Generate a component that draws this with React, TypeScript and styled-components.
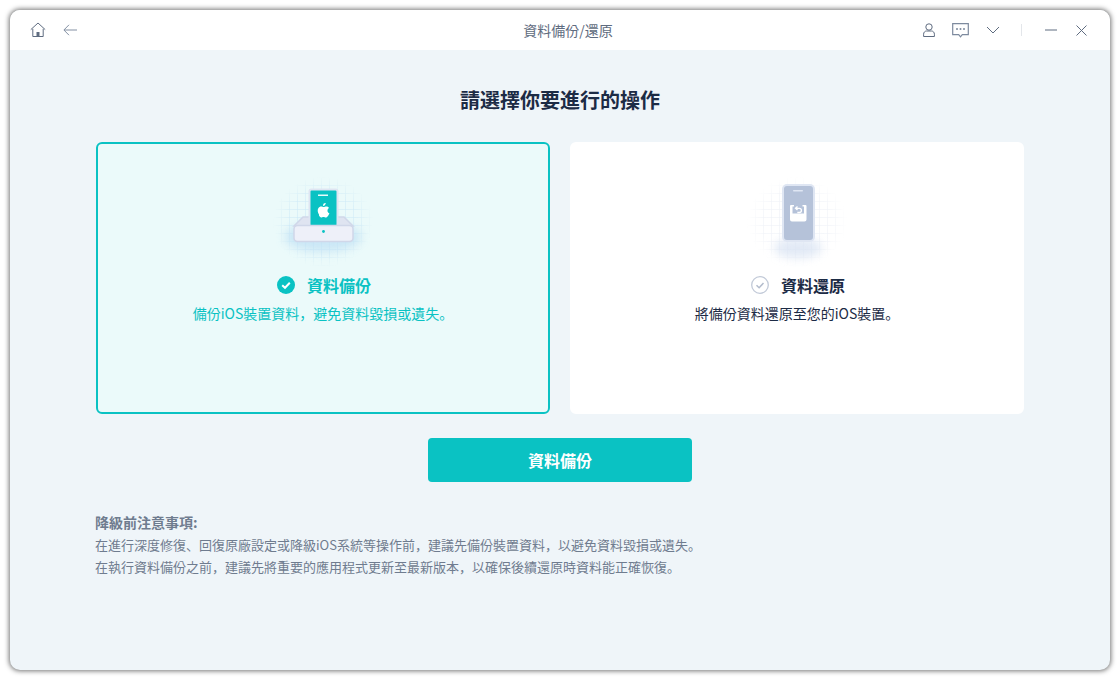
import React, { useState } from "react";
import styled, { createGlobalStyle } from "styled-components";

const fontStack = `"Noto Sans CJK JP", "Noto Sans CJK TC", "Noto Sans", sans-serif`;

const GlobalStyle = createGlobalStyle`
  html, body {
    margin: 0;
    padding: 0;
    background: #ffffff;
  }
  body {
    font-family: ${fontStack};
  }
`;

const GridDefs = ({ id, color }: { id: string; color: string }) => (
  <defs>
    <pattern id={`${id}-grid`} width="8" height="8" patternUnits="userSpaceOnUse">
      <path d="M8 0H0V8" fill="none" stroke={color} strokeWidth="1" />
    </pattern>
    <radialGradient id={`${id}-fade`} cx="50%" cy="50%" r="50%">
      <stop offset="0%" stopColor="#fff" stopOpacity="1" />
      <stop offset="70%" stopColor="#fff" stopOpacity="0.75" />
      <stop offset="100%" stopColor="#fff" stopOpacity="0" />
    </radialGradient>
    <mask id={`${id}-mask`}>
      <rect width="100" height="90" fill={`url(#${id}-fade)`} />
    </mask>
    <filter id={`${id}-blur`} x="-50%" y="-50%" width="200%" height="200%">
      <feGaussianBlur stdDeviation="5" />
    </filter>
  </defs>
);

const BackupArt = () => (
  <svg width="100" height="90" viewBox="0 0 100 90">
    <GridDefs id="backup" color="#c4e3f5" />
    <rect width="100" height="90" fill="url(#backup-grid)" mask="url(#backup-mask)" />
    <ellipse cx="50" cy="60" rx="38" ry="15" fill="#bfe0f4" opacity="0.75" filter="url(#backup-blur)" />
    <path d="M30 40h41l9 9H21z" fill="#dfe4f1" stroke="#d0d7e9" strokeWidth="1.5" />
    <rect x="36.5" y="12.5" width="28" height="37" fill="#0ac2c3" stroke="#dfe5f2" strokeWidth="2" rx="2" />
    <rect x="45" y="17.5" width="10" height="1.5" fill="#e8fbfb" />
    <g transform="translate(-1 1)">
      <path
        d="M51.2 26.2c.8-1 2-1.200 2.600-1.200-.1 1-.5 1.800-1 2.300-.5.6-1.200.9-1.800.8 0-.7.4-1.400.2-1.900z"
        fill="#ffffff"
      />
      <path
        d="M47 36.500c-1.300-1.900-1.800-4.600-.7-6.300.7-1.100 1.800-1.700 2.900-1.700 1 0 1.700.6 2.500.6s1.300-.6 2.600-.6c1 0 2 .5 2.700 1.400-2.200 1.300-1.900 4.500.4 5.400-.4 1-.9 1.800-1.400 2.600-.6.900-1.300 1.500-2.200 1.500-.9 0-1.300-.5-2.300-.5s-1.500.5-2.300.5c-.8 0-1.500-.9-2.200-2z"
        fill="#ffffff"
      />
    </g>
    <rect x="21" y="48.5" width="59" height="16" rx="3.5" fill="#eef0f9" stroke="#d0d7e9" strokeWidth="1.5" />
    <circle cx="50.5" cy="54.5" r="1.4" fill="#0ac2c3" />
  </svg>
);

const RestoreArt = () => (
  <svg width="100" height="90" viewBox="0 0 100 90">
    <GridDefs id="restore" color="#e8ecf3" />
    <rect width="100" height="90" fill="url(#restore-grid)" mask="url(#restore-mask)" />
    <ellipse cx="51" cy="71" rx="24" ry="10" fill="#d6e1f2" opacity="0.7" filter="url(#restore-blur)" />
    <rect x="36" y="8" width="31" height="56" rx="4" fill="#b5c2d9" stroke="#dfe6f3" strokeWidth="2" />
    <rect x="46" y="13" width="10" height="1.5" rx="0.7" fill="#dfe6f3" />
    <path
      d="M44 28h3v1.500h-1.500v7H57v-7h-1.500V28h3a1 1 0 0 1 1 1v13.500a2 2 0 0 1-2 2H45a2 2 0 0 1-2-2V29a1 1 0 0 1 1-1z"
      fill="#ffffff"
    />
    <path d="M45.500 38h4l2 2 2-2h4v1l-2 2.500h-8l-2-2.500z" fill="#ffffff" />
    <path
      d="M50.500 29.500l-2 1.800 2 1.800M48.800 31.300h3.500a2.100 2.100 0 0 1 0 4.200h-2"
      fill="none"
      stroke="#ffffff"
      strokeWidth="1.300"
    />
  </svg>
);

const HomeIcon = () => (
  <svg width="16" height="16" viewBox="0 0 16 16" fill="none" stroke="#5f6c80" strokeWidth="1">
    <path d="M.8 7.600 8 1l7.200 6.600" />
    <path d="M2.800 6.800v7.700h10.400V6.800" />
    <rect x="6.500" y="10" width="3" height="4.500" fill="#5f6c80" stroke="none" />
  </svg>
);

const BackIcon = () => (
  <svg width="14" height="12" viewBox="0 0 14 12" fill="none" stroke="#8390a3" strokeWidth="1">
    <path d="M6 .8.900 6 6 11.200M1 6h13" />
  </svg>
);

const UserIcon = () => (
  <svg width="12" height="14" viewBox="0 0 12 14" fill="none" stroke="#5f6c80" strokeWidth="1">
    <circle cx="6" cy="4" r="3.200" />
    <path d="M.6 13.500v-2.300C.6 9.300 2 8 3.500 8h5c1.500 0 2.900 1.300 2.900 3.200v2.300z" />
  </svg>
);

const FeedbackIcon = () => (
  <svg width="17" height="15" viewBox="0 0 17 15" fill="none">
    <path d="M.7.700h15.600v11h-6L8.500 13.800 6.700 11.700h-6z" stroke="#7d8a9e" strokeWidth="1.200" />
    <circle cx="5" cy="6" r="1" fill="#7d8a9e" />
    <circle cx="8.500" cy="6" r="1" fill="#7d8a9e" />
    <circle cx="12" cy="6" r="1" fill="#7d8a9e" />
  </svg>
);

const ChevronIcon = () => (
  <svg width="14" height="8" viewBox="0 0 14 8" fill="none" stroke="#5f6c80" strokeWidth="1">
    <path d="M1 1l6 6 6-6" />
  </svg>
);

const MinimizeIcon = () => (
  <svg width="12" height="2" viewBox="0 0 12 2" fill="none" stroke="#5f6c80" strokeWidth="1">
    <path d="M0 1h12" />
  </svg>
);

const CloseIcon = () => (
  <svg width="11" height="11" viewBox="0 0 11 11" fill="none" stroke="#5f6c80" strokeWidth="1">
    <path d="M.5.500l10 10M10.500.500l-10 10" />
  </svg>
);

const CheckBadge = ({ active }: { active: boolean }) =>
  active ? (
    <svg width="18" height="18" viewBox="0 0 18 18">
      <circle cx="9" cy="9" r="9" fill="#0ac2c3" />
      <path d="M5.200 9.200l2.800 2.600 4.800-5" fill="none" stroke="#fff" strokeWidth="2" />
    </svg>
  ) : (
    <svg width="18" height="18" viewBox="0 0 18 18">
      <circle cx="9" cy="9" r="8.300" fill="none" stroke="#c2cad8" strokeWidth="1.300" />
      <path d="M5.500 9.200l2.600 2.500 4.400-4.600" fill="none" stroke="#b3bccc" strokeWidth="1.500" />
    </svg>
  );

type Mode = "backup" | "restore";

const options: { key: Mode; title: string; desc: string; art: React.ReactNode }[] = [
  {
    key: "backup",
    title: "資料備份",
    desc: "備份iOS裝置資料\uFF0C避免資料毀損或遺失。",
    art: <BackupArt />,
  },
  {
    key: "restore",
    title: "資料還原",
    desc: "將備份資料還原至您的iOS裝置。",
    art: <RestoreArt />,
  },
];

const notes = [
  "在進行深度修復、回復原廠設定或降級iOS系統等操作前\uFF0C建議先備份裝置資料\uFF0C以避免資料毀損或遺失。",
  "在執行資料備份之前\uFF0C建議先將重要的應用程式更新至最新版本\uFF0C以確保後續還原時資料能正確恢復。",
];

export default function App() {
  const [mode, setMode] = useState<Mode>("backup");

  return (
    <Page>
      <GlobalStyle />
      <Window>
        <TitleBar>
          <BarGroup>
            <IconButton $width={16}>
              <HomeIcon />
            </IconButton>
            <IconButton $width={14}>
              <BackIcon />
            </IconButton>
          </BarGroup>
          <BarTitle>資料備份/還原</BarTitle>
          <BarActions>
            <IconButton $width={12}>
              <UserIcon />
            </IconButton>
            <IconButton $width={17}>
              <FeedbackIcon />
            </IconButton>
            <IconButton $width={14}>
              <ChevronIcon />
            </IconButton>
            <BarDivider />
            <IconButton $width={17}>
              <MinimizeIcon />
            </IconButton>
            <IconButton $width={11}>
              <CloseIcon />
            </IconButton>
          </BarActions>
        </TitleBar>

        <Content>
          <Heading>請選擇你要進行的操作</Heading>
          <CardRow>
            {options.map((option) => {
              const active = option.key === mode;
              return (
                <Card key={option.key} $active={active} onClick={() => setMode(option.key)}>
                  <ArtBox>{option.art}</ArtBox>
                  <CardTitleRow>
                    <CheckBadge active={active} />
                    <CardTitle $active={active}>{option.title}</CardTitle>
                  </CardTitleRow>
                  <CardDesc $active={active}>{option.desc}</CardDesc>
                </Card>
              );
            })}
          </CardRow>
          <PrimaryButton>{mode === "backup" ? "資料備份" : "資料還原"}</PrimaryButton>
          <Notes>
            <NotesTitle>降級前注意事項:</NotesTitle>
            {notes.map((line) => (
              <NotesLine key={line}>{line}</NotesLine>
            ))}
          </Notes>
        </Content>
      </Window>
    </Page>
  );
}

const Page = styled.div`
  width: 1120px;
  height: 680px;
  padding: 10px;
  box-sizing: border-box;
  overflow: hidden;
`;

const Window = styled.div`
  width: 1100px;
  height: 660px;
  border-radius: 10px;
  overflow: hidden;
  background: #eff5f9;
  box-shadow: 0 0 5px 1px rgba(0, 0, 0, 0.55);
  display: flex;
  flex-direction: column;
`;

const TitleBar = styled.header`
  position: relative;
  height: 40px;
  flex: none;
  background: #ffffff;
  display: flex;
  align-items: center;
  justify-content: space-between;
  padding: 0 23px 0 20px;
`;

const BarGroup = styled.div`
  display: flex;
  align-items: center;
  gap: 17px;
`;

const BarActions = styled.div`
  display: flex;
  align-items: center;
  gap: 17px;
`;

const IconButton = styled.button<{ $width: number }>`
  width: ${(p) => p.$width}px;
  height: 18px;
  padding: 0;
  border: none;
  background: none;
  display: flex;
  align-items: center;
  justify-content: center;
  cursor: pointer;
`;

const BarTitle = styled.div`
  position: absolute;
  left: 16px;
  right: 0;
  text-align: center;
  font-size: 14px;
  line-height: 40px;
  color: #5f6c80;
  pointer-events: none;
`;

const BarDivider = styled.span`
  width: 1px;
  height: 12px;
  margin: 0 3px 0 4px;
  background: #e3e6ea;
`;

const Content = styled.main`
  flex: 1;
  display: flex;
  flex-direction: column;
  align-items: center;
  padding-top: 35px;
`;

const Heading = styled.h1`
  margin: 0 0 27px;
  font-size: 20px;
  line-height: 30px;
  font-weight: 700;
  color: #1c2b45;
`;

const CardRow = styled.div`
  display: flex;
  gap: 20px;
`;

const Card = styled.div<{ $active: boolean }>`
  width: 454px;
  height: 272px;
  box-sizing: border-box;
  border-radius: 6px;
  border: 2px solid ${(p) => (p.$active ? "#0ac2c3" : "#ffffff")};
  background: ${(p) => (p.$active ? "#ebfafa" : "#ffffff")};
  display: flex;
  flex-direction: column;
  align-items: center;
  padding-top: 33px;
  cursor: pointer;
`;

const ArtBox = styled.div`
  width: 100px;
  height: 90px;
`;

const CardTitleRow = styled.div`
  display: flex;
  align-items: center;
  gap: 12px;
  margin-top: 6px;
  padding-left: 2px;
  height: 24px;
`;

const CardTitle = styled.span<{ $active: boolean }>`
  font-size: 16px;
  font-weight: 700;
  color: ${(p) => (p.$active ? "#0ac2c3" : "#1c2b45")};
`;

const CardDesc = styled.p<{ $active: boolean }>`
  margin: 6px 0 0;
  font-size: 14px;
  line-height: 20px;
  color: ${(p) => (p.$active ? "#0ac2c3" : "#1c2b45")};
`;

const PrimaryButton = styled.button`
  width: 264px;
  height: 44px;
  margin-top: 24px;
  border: none;
  border-radius: 4px;
  background: #0ac2c3;
  color: #ffffff;
  font-family: ${fontStack};
  font-size: 16px;
  font-weight: 700;
  cursor: pointer;
`;

const Notes = styled.section`
  align-self: flex-start;
  margin: 29px 0 0 85px;
`;

const NotesTitle = styled.div`
  font-size: 14px;
  line-height: 23px;
  font-weight: 700;
  color: #6f7c8f;
`;

const NotesLine = styled.div`
  font-size: 13px;
  line-height: 22px;
  color: #6f7c8f;
`;
